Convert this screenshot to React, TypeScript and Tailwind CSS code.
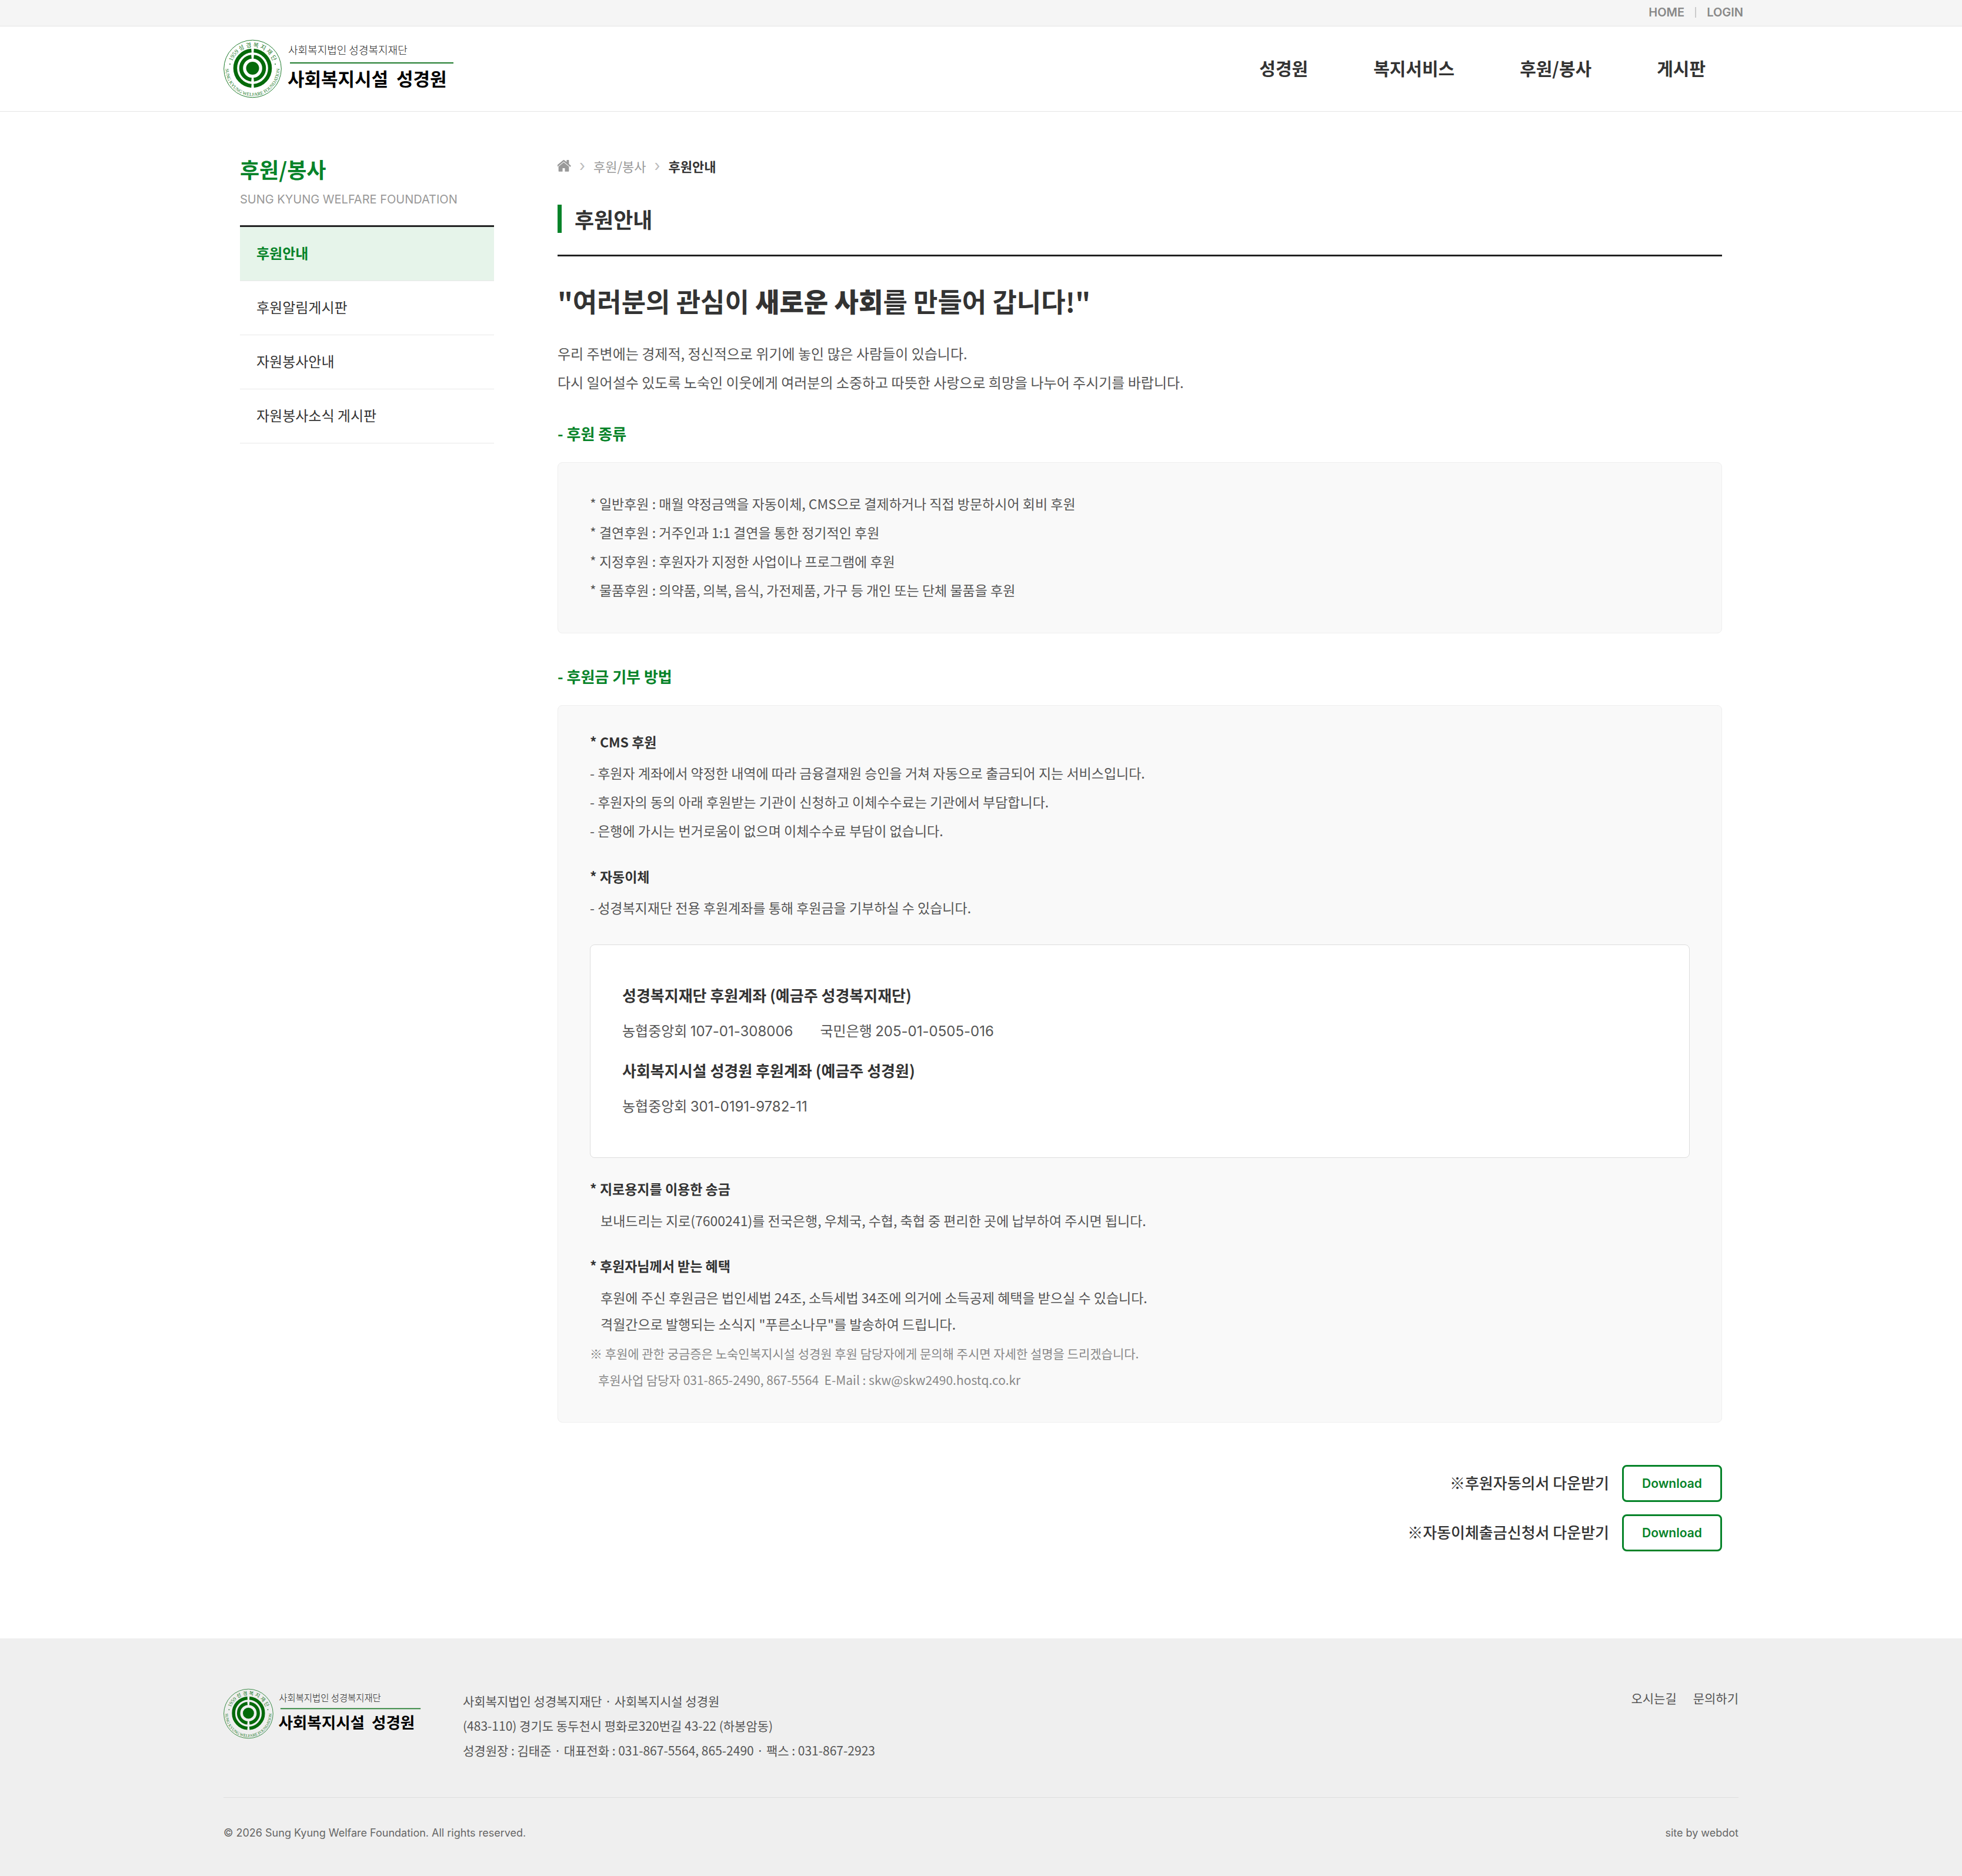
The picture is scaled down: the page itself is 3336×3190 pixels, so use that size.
const topLinks = ['HOME', 'LOGIN'];
const mainMenu = ['성경원', '복지서비스', '후원/봉사', '게시판'];
const sideMenu = ['후원안내', '후원알림게시판', '자원봉사안내', '자원봉사소식 게시판'];

const supportTypes = [
  '* 일반후원 : 매월 약정금액을 자동이체, CMS으로 결제하거나 직접 방문하시어 회비 후원',
  '* 결연후원 : 거주인과 1:1 결연을 통한 정기적인 후원',
  '* 지정후원 : 후원자가 지정한 사업이나 프로그램에 후원',
  '* 물품후원 : 의약품, 의복, 음식, 가전제품, 가구 등 개인 또는 단체 물품을 후원',
];

const cmsLines = [
  '- 후원자 계좌에서 약정한 내역에 따라 금융결재원 승인을 거쳐 자동으로 출금되어 지는 서비스입니다.',
  '- 후원자의 동의 아래 후원받는 기관이 신청하고 이체수수료는 기관에서 부담합니다.',
  '- 은행에 가시는 번거로움이 없으며 이체수수료 부담이 없습니다.',
];

const downloads = ['※후원자동의서 다운받기', '※자동이체출금신청서 다운받기'];

function Logo({ id, className }: { id: string; className: string }) {
  return (
    <svg viewBox="0 0 392 100" className={className} role="img" aria-label="사회복지시설 성경원">
      <defs>
        <path id={`${id}-top`} d="M 12.5 50 A 37 37 0 0 1 86.5 50" />
        <path id={`${id}-bottom`} d="M 3.7 46 A 46 46 0 1 0 95.3 46" />
      </defs>
      <circle cx="49.5" cy="50" r="48.8" fill="none" stroke="#1c7a2a" strokeWidth="1" />
      <circle cx="49.5" cy="49" r="11" fill="#046a0a" />
      <g fill="none" stroke="#046a0a" strokeWidth="6.5">
        <path d="M 51.5 19.1 A 30 30 0 0 1 51.5 78.9" />
        <path d="M 47.5 19.1 A 30 30 0 0 0 47.5 78.9" />
        <path d="M 51.5 29.6 A 19.5 19.5 0 0 1 51.5 68.4" />
        <path d="M 47.5 29.6 A 19.5 19.5 0 0 0 47.5 68.4" />
      </g>
      <g fill="#1c7a2a" className="font-['Liberation_Serif','Noto_Sans_CJK_KR',serif]">
        <text fontSize="10" textAnchor="middle">
          <textPath href={`#${id}-top`} startOffset="50%">1959 성 경 복 지 재 단</textPath>
        </text>
        <text fontSize="8" textAnchor="middle">
          <textPath href={`#${id}-bottom`} startOffset="50%">SUNG KYUNG WELFARE FOUNDATION</textPath>
        </text>
        <circle cx="11" cy="42" r="1" />
        <circle cx="88" cy="42" r="1" />
      </g>
      <text x="110" y="25" fontSize="18" fontWeight="300" fill="#222">사회복지법인 성경복지재단</text>
      <rect x="113" y="39" width="278" height="2" fill="#1c7a2a" />
      <g fontSize="31" fontWeight="700" fill="#000">
        <text x="109" y="79">사회복지시설</text>
        <text x="294" y="79">성경원</text>
      </g>
    </svg>
  );
}

function HomeIcon() {
  return (
    <svg viewBox="160 250 1472 1300" className="h-5 w-[23px]" fill="currentColor" aria-hidden="true">
      <path d="M1408 992v480q0 26-19 45t-45 19h-384v-384h-256v384h-384q-26 0-45-19t-19-45v-480q0-1 .5-3t.5-3l575-474 575 474q1 2 1 6zm223-69l-62 74q-8 9-21 11h-3q-13 0-21-7l-692-577-692 577q-12 8-24 7-13-2-21-11l-62-74q-8-10-7-23.5t11-21.5l719-599q32-26 76-26t76 26l244 204v-195q0-14 9-23t23-9h192q14 0 23 9t9 23v408l219 182q10 8 11 21.5t-7 23.5z" />
    </svg>
  );
}

function Header() {
  return (
    <header>
      <div className="border-b border-[#e5e5e5] bg-[#f5f5f5]">
        <ul className="mx-auto flex h-11 max-w-[2592px] items-center justify-end pb-0.5 font-['Inter',sans-serif] text-xl font-semibold text-[#888]">
          {topLinks.map((label, i) => (
            <li key={label} className="flex items-center">
              {i > 0 && <span className="mx-[18px] h-[18px] w-0.5 bg-[#ccc]" />}
              <a href="#">{label}</a>
            </li>
          ))}
        </ul>
      </div>
      <div className="border-b border-[#e5e5e5]">
        <div className="mx-auto flex h-36 max-w-[2592px] items-center justify-between px-2">
          <a href="#">
            <Logo id="header-logo" className="h-[100px] w-[392px]" />
          </a>
          <nav className="pb-1">
            <ul className="flex gap-[111px] pr-14 text-[30px] leading-[40px] font-bold text-[#333]">
              {mainMenu.map((label) => (
                <li key={label}>
                  <a href="#">{label}</a>
                </li>
              ))}
            </ul>
          </nav>
        </div>
      </div>
    </header>
  );
}

function Sidebar() {
  return (
    <aside className="w-[432px] shrink-0">
      <h2 className="text-[36px] leading-[44px] font-bold text-[#068329]">후원/봉사</h2>
      <p className="mt-4 font-['Inter',sans-serif] text-xl text-[#999]">SUNG KYUNG WELFARE FOUNDATION</p>
      <ul className="mt-[30px] border-t-[3px] border-[#222] text-2xl text-[#333]">
        {sideMenu.map((label, i) => (
          <li key={label} className="border-b border-[#e8e8e8]">
            <a
              href="#"
              className={
                i === 0
                  ? 'flex h-[91px] items-center bg-[#e6f4ea] px-7 pb-1 font-bold text-[#068329]'
                  : 'flex h-[91px] items-center px-7 pb-1'
              }
            >
              {label}
            </a>
          </li>
        ))}
      </ul>
    </aside>
  );
}

function ItemTitle({ children }: { children: string }) {
  return <h4 className="leading-9 font-bold text-[#333]">{children}</h4>;
}

function Num({ children }: { children: string }) {
  return <span className="font-['Inter',sans-serif] leading-none">{children}</span>;
}

function Accounts() {
  return (
    <div className="mt-[38px] rounded-lg border border-[#ddd] bg-white px-[54px] pt-[65px] pb-[68px] text-2xl leading-10">
      <h5 className="text-[26px] leading-10 font-bold text-[#333]">성경복지재단 후원계좌 (예금주 성경복지재단)</h5>
      <p className="mt-5 flex gap-[46px] leading-10">
        <span>농협중앙회 <Num>107-01-308006</Num></span>
        <span>국민은행 <Num>205-01-0505-016</Num></span>
      </p>
      <h5 className="mt-7 text-[26px] leading-10 font-bold text-[#333]">사회복지시설 성경원 후원계좌 (예금주 성경원)</h5>
      <p className="mt-5 leading-10">농협중앙회 <Num>301-0191-9782-11</Num></p>
    </div>
  );
}

function Content() {
  return (
    <main className="min-w-0 flex-1 text-[#555]">
      <nav className="flex h-[34px] items-center gap-[14px] text-[22px] leading-[34px] text-[#999]">
        <a href="#" aria-label="홈">
          <HomeIcon />
        </a>
        <span className="font-['Inter',sans-serif] text-[26px] text-[#bbb]">›</span>
        <a href="#">후원/봉사</a>
        <span className="font-['Inter',sans-serif] text-[26px] text-[#bbb]">›</span>
        <strong className="text-[#333]">후원안내</strong>
      </nav>

      <div className="mt-[49px] flex items-center gap-[22px] border-b-[3px] border-[#222] pb-[37px]">
        <span className="h-12 w-[7px] bg-[#068329]" />
        <h1 className="text-[36px] leading-[48px] font-bold text-[#333]">후원안내</h1>
      </div>

      <h2 className="mt-[46px] text-[45px] leading-[60px] font-bold text-[#333]">
        "여러분의 관심이 <strong className="font-black">새로운 사회</strong>를 만들어 갑니다!"
      </h2>
      <p className="mt-[34px] text-2xl leading-[49px]">
        우리 주변에는 경제적, 정신적으로 위기에 놓인 많은 사람들이 있습니다.
        <br />
        다시 일어설수 있도록 노숙인 이웃에게 여러분의 소중하고 따뜻한 사랑으로 희망을 나누어 주시기를 바랍니다.
      </p>

      <h3 className="mt-[45px] text-[26px] leading-9 font-bold text-[#068329]">- 후원 종류</h3>
      <ul className="mt-[31px] rounded-lg border border-[#eee] bg-[#f9f9f9] px-[54px] pt-[45px] pb-12 text-[23px] leading-[49px]">
        {supportTypes.map((line) => (
          <li key={line}>{line}</li>
        ))}
      </ul>

      <h3 className="mt-[55px] text-[26px] leading-9 font-bold text-[#068329]">- 후원금 기부 방법</h3>
      <div className="mt-[31px] rounded-lg border border-[#eee] bg-[#f9f9f9] px-[54px] pt-[43px] pb-[49px] text-[23px]">
        <ItemTitle>* CMS 후원</ItemTitle>
        <ul className="mt-[11px] mb-[35px] leading-[49px]">
          {cmsLines.map((line) => (
            <li key={line}>{line}</li>
          ))}
        </ul>

        <ItemTitle>* 자동이체</ItemTitle>
        <p className="mt-[11px] leading-[49px]">- 성경복지재단 전용 후원계좌를 통해 후원금을 기부하실 수 있습니다.</p>
        <Accounts />

        <div className="mt-[34px]">
          <ItemTitle>* 지로용지를 이용한 송금</ItemTitle>
        </div>
        <p className="mt-[14px] mb-9 pl-[18px] leading-[45px]">
          보내드리는 지로(7600241)를 전국은행, 우체국, 수협, 축협 중 편리한 곳에 납부하여 주시면 됩니다.
        </p>

        <ItemTitle>* 후원자님께서 받는 혜택</ItemTitle>
        <p className="mt-[14px] pl-[18px] leading-[45px]">
          후원에 주신 후원금은 법인세법 24조, 소득세법 34조에 의거에 소득공제 혜택을 받으실 수 있습니다.
          <br />
          격월간으로 발행되는 소식지 "푸른소나무"를 발송하여 드립니다.
        </p>
        <div className="mt-[5px] text-[21px] leading-[45px] text-[#888]">
          <p>※ 후원에 관한 궁금증은 노숙인복지시설 성경원 후원 담당자에게 문의해 주시면 자세한 설명을 드리겠습니다.</p>
          <p className="pl-[14px]">후원사업 담당자 031-865-2490, 867-5564&nbsp; E-Mail : skw@skw2490.hostq.co.kr</p>
        </div>
      </div>

      <ul className="mt-[72px] flex flex-col items-end gap-[21px]">
        {downloads.map((label) => (
          <li key={label} className="flex items-center gap-[22px]">
            <span className="pb-1 text-[26px] font-medium text-[#333]">{label}</span>
            <a
              href="#"
              className="flex h-[63px] w-[170px] items-center justify-center rounded-lg border-[3px] border-[#068329] bg-white font-['Inter',sans-serif] text-[21px] font-semibold text-[#068329]"
            >
              Download
            </a>
          </li>
        ))}
      </ul>
    </main>
  );
}

function Footer() {
  return (
    <footer className="bg-[#efefef] pt-[85px] pb-[58px] text-[#555]">
      <div className="mx-auto max-w-[2592px] px-2">
        <div className="flex text-[21px] leading-[42px]">
          <Logo id="footer-logo" className="h-[86px] w-[336px]" />
          <address className="ml-[71px] not-italic">
            사회복지법인 성경복지재단 · 사회복지시설 성경원
            <br />
            (483-110) 경기도 동두천시 평화로320번길 43-22 (하봉암동)
            <br />
            성경원장 : 김태준 · 대표전화 : 031-867-5564, 865-2490 · 팩스 : 031-867-2923
          </address>
          <ul className="ml-auto flex gap-7 leading-8">
            <li><a href="#">오시는길</a></li>
            <li><a href="#">문의하기</a></li>
          </ul>
        </div>
        <div className="mt-[59px] flex justify-between border-t border-[#ddd] pt-[45px] font-['Inter',sans-serif] text-lg leading-[30px] text-[#666]">
          <p>© 2026 Sung Kyung Welfare Foundation. All rights reserved.</p>
          <a href="#">site by webdot</a>
        </div>
      </div>
    </footer>
  );
}

export default function App() {
  return (
    <div className="bg-white font-['Noto_Sans_CJK_KR',sans-serif]">
      <Header />
      <div className="mx-auto flex max-w-[2592px] gap-[108px] px-9 pt-[75px] pb-[148px]">
        <Sidebar />
        <Content />
      </div>
      <Footer />
    </div>
  );
}
